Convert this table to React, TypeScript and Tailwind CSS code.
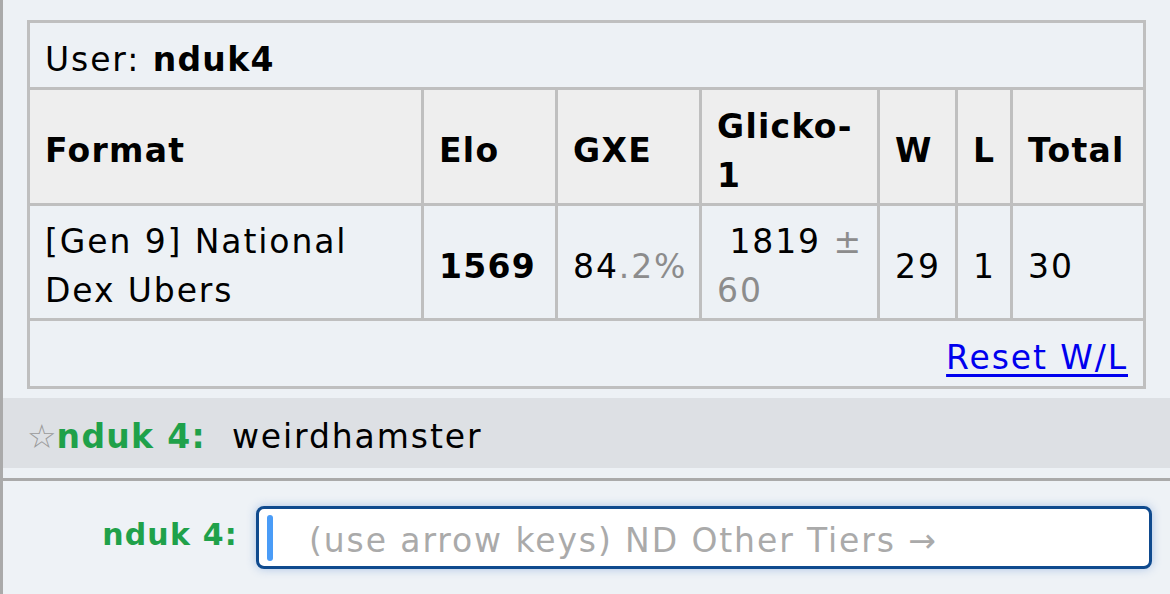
const font = { fontFamily: '"DejaVu Sans", Verdana, sans-serif' };

const cell = 'bg-[#edf1f5] px-[15px] pt-[8px] flex items-center';
const head = 'bg-[#eeeeee] px-[15px] pt-[8px] flex items-center font-bold tracking-[1.3px]';

export default function App() {
  return (
    <div
      className="w-[1170px] h-[594px] flex flex-col bg-[#edf1f5] border-l-[3px] border-[#aaaaaa] text-black text-[33px] leading-[49px] tracking-[1.9px] overflow-hidden"
      style={font}
    >
      <div className="pt-[20px] pl-[24px] pr-[24px]">
        <div className="grid grid-cols-[391px_131px_141px_175px_75px_52px_130px] grid-rows-[64px_113px_112px_65px] gap-[3px] p-[3px] bg-[#bfbfbf] w-[1119px]">
          <div className={`${cell} col-span-7`}>
            User:&nbsp;<strong className="tracking-[1.3px]">nduk4</strong>
          </div>

          <div className={head}>Format</div>
          <div className={head}>Elo</div>
          <div className={head}>GXE</div>
          <div className={head}>Glicko-<br />1</div>
          <div className={head}>W</div>
          <div className={head}>L</div>
          <div className={head}>Total</div>

          <div className={cell}>
            <span>[Gen 9] National Dex Ubers</span>
          </div>
          <div className={`${cell} font-bold tracking-[1.3px]`}>1569</div>
          <div className={cell}>
            84<span className="text-[#8c8c8c]">.2%</span>
          </div>
          <div className={`${cell} pr-0`}>
            <span className="whitespace-nowrap">
              {'\u00a0'}1819 <span className="text-[#8c8c8c]">±</span>
              <br />
              <span className="text-[#8c8c8c]">60</span>
            </span>
          </div>
          <div className={cell}>29</div>
          <div className={cell}>1</div>
          <div className={cell}>30</div>

          <div className={`${cell} col-span-7 justify-end`}>
            <a href="#" className="text-[#0000ee] underline underline-offset-[5px] decoration-[3px]">
              Reset W/L
            </a>
          </div>
        </div>
      </div>

      <div className="mt-[9px] h-[70px] bg-[#dde0e4] flex items-center pl-[24px] pt-[6px]">
        <span className="text-[#9a9a9a] tracking-normal">☆</span>
        <strong className="text-[#1fa14a] tracking-[1.3px]">nduk 4:</strong>
        <span className="ml-[26px]">weirdhamster</span>
      </div>

      <div className="mt-[10px] border-t-[3px] border-[#aaaaaa] flex-1 bg-[#eef2f6] flex items-start pt-[25px]">
        <div className="w-[235px] text-right text-[30px] font-bold text-[#1fa14a] tracking-[1.2px] pt-[4px]">nduk 4:</div>
        <div className="ml-[18px] w-[896px] h-[63px] bg-white border-[3px] border-[#0f4a8e] rounded-[8px] shadow-[0_0_10px_rgba(90,140,210,0.45)] flex items-center pl-[8px]">
          <span className="w-[6px] h-[46px] rounded-[3px] bg-[#4a9cf7]" />
          <span className="ml-[36px] pt-[6px] text-[#aaaaaa]">(use arrow keys) ND Other Tiers →</span>
        </div>
      </div>
    </div>
  );
}
